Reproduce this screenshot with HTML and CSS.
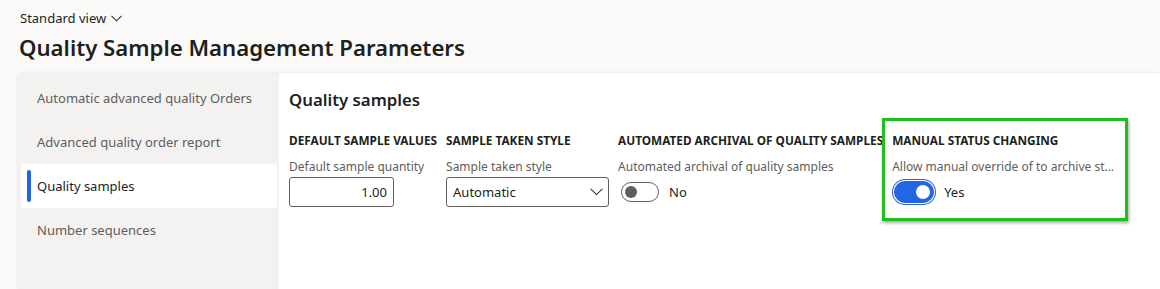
FILE: index.html
```html
<!DOCTYPE html>
<html lang="en">
<head>
  <meta charset="UTF-8">
  <title>Quality Sample Management Parameters</title>
  <link rel="stylesheet" href="styles.css">
</head>
<body>
  <header class="page-header">
    <button class="view-picker" type="button">
      Standard view
      <svg width="11" height="7" viewBox="0 0 11 7"><path d="M0.5 0.8 L5.5 5.8 L10.5 0.8" fill="none" stroke="#323130" stroke-width="1.1"/></svg>
    </button>
    <h1>Quality Sample Management Parameters</h1>
  </header>

  <div class="card">
    <nav class="side-nav">
      <a class="nav-item">Automatic advanced quality Orders</a>
      <a class="nav-item">Advanced quality order report</a>
      <a class="nav-item active">Quality samples</a>
      <a class="nav-item">Number sequences</a>
    </nav>

    <main class="content">
      <h2>Quality samples</h2>
      <div class="groups">
        <section class="group">
          <h3>Default sample values</h3>
          <label class="field-label">Default sample quantity</label>
          <input class="num-input" type="text" value="1.00">
        </section>

        <section class="group">
          <h3>Sample taken style</h3>
          <label class="field-label">Sample taken style</label>
          <div class="select">
            <span>Automatic</span>
            <svg width="13" height="8" viewBox="0 0 13 8"><path d="M0.6 0.8 L6.5 6.6 L12.4 0.8" fill="none" stroke="#323130" stroke-width="1.1"/></svg>
          </div>
        </section>

        <section class="group">
          <h3>Automated archival of quality samples</h3>
          <label class="field-label">Automated archival of quality samples</label>
          <div class="toggle-row">
            <span class="toggle"><span class="knob"></span></span>
            <span class="toggle-text">No</span>
          </div>
        </section>

        <section class="group highlight">
          <h3>Manual status changing</h3>
          <label class="field-label clip">Allow manual override of to archive status</label>
          <div class="toggle-row">
            <span class="toggle on"><span class="knob"></span></span>
            <span class="toggle-text">Yes</span>
          </div>
        </section>
      </div>
    </main>
  </div>
</body>
</html>
```

FILE: styles.css
```css
:root {
  --text: #201f1e;
  --muted: #605e5c;
  --blue: #2266e3;
  --nav-bg: #f3f2f1;
}

body {
  margin: 0;
  padding: 0;
  font-family: "Noto Sans", "Open Sans", sans-serif;
  background: #faf9f8;
  color: var(--text);
  height: 289px;
  overflow: hidden;
}

.page-header {
  padding: 8px 19px 0;
  height: 65px;
}

.view-picker {
  display: flex;
  align-items: center;
  gap: 5px;
  background: none;
  border: 0;
  padding: 0 0 0 1px;
  font: inherit;
  font-size: 13px;
  color: var(--text);
  height: 20px;
}

h1 {
  margin: 5px 0 0;
  font-size: 22.2px;
  font-weight: 600;
  line-height: 30px;
}

.card {
  display: flex;
  margin-left: 18px;
  height: 216px;
  background: #fff;
  border-radius: 6px 0 0 0;
  box-shadow: 0 0 3px rgba(0,0,0,0.12);
  overflow: hidden;
}

.side-nav {
  width: 257px;
  flex: none;
  background: var(--nav-bg);
  padding: 3px 1px 0 3px;
  display: flex;
  flex-direction: column;
}

.nav-item {
  height: 44px;
  display: flex;
  align-items: center;
  padding-left: 16px;
  font-size: 13px;
  color: var(--muted);
  border-radius: 4px;
  position: relative;
}

.nav-item.active {
  background: #fff;
  color: var(--text);
  margin-right: 1px;
}

.nav-item.active::before {
  content: "";
  position: absolute;
  left: 6px;
  top: 6px;
  bottom: 6px;
  width: 4px;
  border-radius: 2px;
  background: var(--blue);
}

.content {
  flex: 1;
  padding: 14px 10px 0;
}

h2 {
  margin: 0;
  font-size: 16.8px;
  font-weight: 600;
  line-height: 26px;
}

.groups {
  display: flex;
  gap: 9px;
  margin-top: 19px;
}

.group {
  display: flex;
  flex-direction: column;
  align-items: flex-start;
}

.group h3 {
  margin: 0;
  font-size: 11.8px;
  font-weight: 700;
  text-transform: uppercase;
  line-height: 16px;
  white-space: nowrap;
}

.field-label {
  margin-top: 11px;
  font-size: 12px;
  color: var(--muted);
  line-height: 16px;
  white-space: nowrap;
}

.field-label.clip {
  max-width: 224px;
  overflow: hidden;
  text-overflow: ellipsis;
}

.num-input {
  margin-top: 2px;
  width: 105px;
  height: 30px;
  box-sizing: border-box;
  border: 1px solid #605e5c;
  border-radius: 3px;
  padding: 0 6px;
  text-align: right;
  font: inherit;
  font-size: 13px;
  color: var(--text);
}

.select {
  margin-top: 2px;
  width: 163px;
  height: 30px;
  box-sizing: border-box;
  border: 1px solid #605e5c;
  border-radius: 3px;
  display: flex;
  align-items: center;
  justify-content: space-between;
  padding: 0 5px 0 6px;
  font-size: 13px;
}

.toggle-row {
  margin-top: 3px;
  display: flex;
  align-items: center;
  gap: 10px;
  height: 28px;
  padding-left: 3px;
}

.toggle {
  width: 38px;
  height: 20px;
  box-sizing: border-box;
  border: 1px solid #605e5c;
  border-radius: 10px;
  display: flex;
  align-items: center;
  padding: 0 3px;
}

.toggle .knob {
  width: 12px;
  height: 12px;
  border-radius: 50%;
  background: #605e5c;
}

.toggle.on {
  background: var(--blue);
  border-color: var(--blue);
  justify-content: flex-end;
  width: 40px;
  height: 22px;
  border-radius: 11px;
  box-shadow: 0 0 0 1px #fff, 0 0 0 2px var(--blue);
}

.toggle.on .knob {
  background: #fff;
  width: 14px;
  height: 14px;
}

.toggle-text {
  font-size: 13px;
}

.highlight {
  position: relative;
}

.highlight::after {
  content: "";
  position: absolute;
  left: -10px;
  top: -14px;
  right: -12px;
  bottom: -14px;
  border: 3px solid #1cbf1c;
  box-shadow: 1px 2px 3px rgba(0,0,0,0.35);
  pointer-events: none;
}

.highlight .toggle-row {
  padding-left: 2px;
}
```
